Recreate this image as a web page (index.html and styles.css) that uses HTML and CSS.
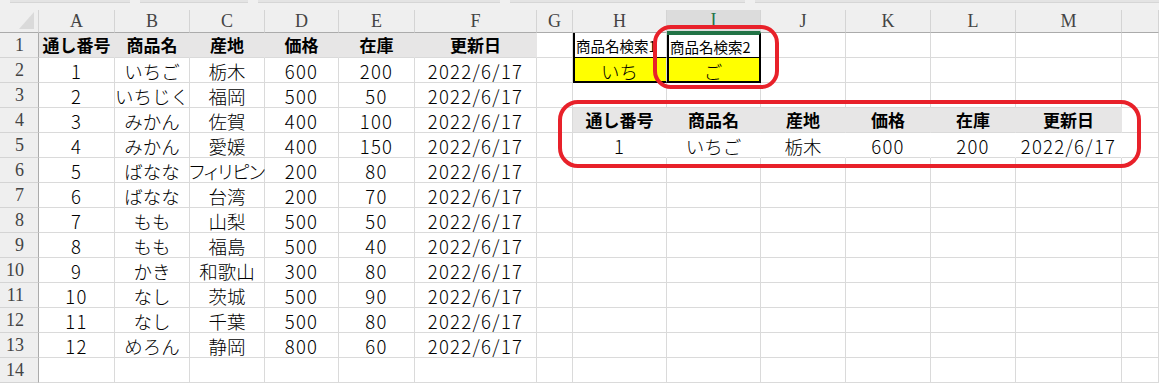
FILE: index.html
```html
<!DOCTYPE html>
<html lang="ja">
<head>
<meta charset="utf-8">
<title>Sheet</title>
<link rel="stylesheet" href="styles.css">
</head>
<body>
<div class="sheet">
  <div class="topbar"><span class="seg s1"></span><span class="seg s2"></span><span class="seg s3"></span><span class="seg s4"></span><span class="seg s5"></span></div>

  <div class="corner"><span class="tri"></span></div>
  <div class="ch">A</div><div class="ch">B</div><div class="ch">C</div><div class="ch">D</div><div class="ch">E</div><div class="ch">F</div><div class="ch">G</div><div class="ch">H</div><div class="ch act">I</div><div class="ch">J</div><div class="ch">K</div><div class="ch">L</div><div class="ch">M</div><div class="ch"></div>

  <div class="rh">1</div>
  <div class="c hd">通し番号</div><div class="c hd">商品名</div><div class="c hd">産地</div><div class="c hd">価格</div><div class="c hd">在庫</div><div class="c hd">更新日</div>
  <div class="c"></div><div class="c sh bl mid">商品名検索1</div><div class="c sh bl br mid sel">商品名検索2</div>
  <div class="c"></div><div class="c"></div><div class="c"></div><div class="c"></div><div class="c"></div>

  <div class="rh">2</div>
  <div class="c n">1</div><div class="c">いちご</div><div class="c">栃木</div><div class="c n">600</div><div class="c n">200</div><div class="c n">2022/6/17</div>
  <div class="c"></div><div class="c yl bl bb">いち</div><div class="c yl bl br bb">ご</div>
  <div class="c"></div><div class="c"></div><div class="c"></div><div class="c"></div><div class="c"></div>

  <div class="rh">3</div>
  <div class="c n">2</div><div class="c">いちじく</div><div class="c">福岡</div><div class="c n">500</div><div class="c n">50</div><div class="c n">2022/6/17</div>
  <div class="c"></div><div class="c"></div><div class="c"></div><div class="c"></div><div class="c"></div><div class="c"></div><div class="c"></div><div class="c"></div>

  <div class="rh">4</div>
  <div class="c n">3</div><div class="c">みかん</div><div class="c">佐賀</div><div class="c n">400</div><div class="c n">100</div><div class="c n">2022/6/17</div>
  <div class="c"></div><div class="c hd">通し番号</div><div class="c hd">商品名</div><div class="c hd">産地</div><div class="c hd">価格</div><div class="c hd">在庫</div><div class="c hd">更新日</div><div class="c"></div>

  <div class="rh">5</div>
  <div class="c n">4</div><div class="c">みかん</div><div class="c">愛媛</div><div class="c n">400</div><div class="c n">150</div><div class="c n">2022/6/17</div>
  <div class="c"></div><div class="c n wf">1</div><div class="c wf">いちご</div><div class="c wf">栃木</div><div class="c n wf">600</div><div class="c n wf">200</div><div class="c n wf">2022/6/17</div><div class="c"></div>

  <div class="rh">6</div>
  <div class="c n">5</div><div class="c">ばなな</div><div class="c nar">フィリピン</div><div class="c n">200</div><div class="c n">80</div><div class="c n">2022/6/17</div>
  <div class="c"></div><div class="c"></div><div class="c"></div><div class="c"></div><div class="c"></div><div class="c"></div><div class="c"></div><div class="c"></div>

  <div class="rh">7</div>
  <div class="c n">6</div><div class="c">ばなな</div><div class="c">台湾</div><div class="c n">200</div><div class="c n">70</div><div class="c n">2022/6/17</div>
  <div class="c"></div><div class="c"></div><div class="c"></div><div class="c"></div><div class="c"></div><div class="c"></div><div class="c"></div><div class="c"></div>

  <div class="rh">8</div>
  <div class="c n">7</div><div class="c">もも</div><div class="c">山梨</div><div class="c n">500</div><div class="c n">50</div><div class="c n">2022/6/17</div>
  <div class="c"></div><div class="c"></div><div class="c"></div><div class="c"></div><div class="c"></div><div class="c"></div><div class="c"></div><div class="c"></div>

  <div class="rh">9</div>
  <div class="c n">8</div><div class="c">もも</div><div class="c">福島</div><div class="c n">500</div><div class="c n">40</div><div class="c n">2022/6/17</div>
  <div class="c"></div><div class="c"></div><div class="c"></div><div class="c"></div><div class="c"></div><div class="c"></div><div class="c"></div><div class="c"></div>

  <div class="rh">10</div>
  <div class="c n">9</div><div class="c">かき</div><div class="c">和歌山</div><div class="c n">300</div><div class="c n">80</div><div class="c n">2022/6/17</div>
  <div class="c"></div><div class="c"></div><div class="c"></div><div class="c"></div><div class="c"></div><div class="c"></div><div class="c"></div><div class="c"></div>

  <div class="rh">11</div>
  <div class="c n">10</div><div class="c">なし</div><div class="c">茨城</div><div class="c n">500</div><div class="c n">90</div><div class="c n">2022/6/17</div>
  <div class="c"></div><div class="c"></div><div class="c"></div><div class="c"></div><div class="c"></div><div class="c"></div><div class="c"></div><div class="c"></div>

  <div class="rh">12</div>
  <div class="c n">11</div><div class="c">なし</div><div class="c">千葉</div><div class="c n">500</div><div class="c n">80</div><div class="c n">2022/6/17</div>
  <div class="c"></div><div class="c"></div><div class="c"></div><div class="c"></div><div class="c"></div><div class="c"></div><div class="c"></div><div class="c"></div>

  <div class="rh">13</div>
  <div class="c n">12</div><div class="c">めろん</div><div class="c">静岡</div><div class="c n">800</div><div class="c n">60</div><div class="c n">2022/6/17</div>
  <div class="c"></div><div class="c"></div><div class="c"></div><div class="c"></div><div class="c"></div><div class="c"></div><div class="c"></div><div class="c"></div>

  <div class="rh">14</div>
  <div class="c"></div><div class="c"></div><div class="c"></div><div class="c"></div><div class="c"></div><div class="c"></div><div class="c"></div><div class="c"></div><div class="c"></div><div class="c"></div><div class="c"></div><div class="c"></div><div class="c"></div><div class="c"></div>

  <div class="ring ring-search"></div>
  <div class="ring ring-result"></div>
</div>
</body>
</html>
```

FILE: styles.css
```css
html, body {
  margin: 0;
  padding: 0;
  background: #ffffff;
}

.sheet {
  position: relative;
  width: 1159px;
  height: 383px;
  overflow: hidden;
  display: grid;
  grid-template-columns: 39px 76px 75px 75px 74px 76px 122px 36px 94px 94px 85px 85px 85px 106px 37px;
  grid-template-rows: 10px 23px repeat(14, 25px);
  font-family: "Noto Sans CJK JP", "Noto Sans", sans-serif;
  font-size: 18.5px;
  font-weight: 300;
  color: #000;
}

.topbar {
  grid-column: 1 / -1;
  background: #f0f0f0;
  display: flex;
  align-items: flex-start;
  gap: 10px;
  padding-left: 10px;
}
.seg {
  display: block;
  height: 3px;
  background: #e4e4e4;
  border-bottom: 1px solid #d6d6d6;
  box-sizing: border-box;
}
.s1 { width: 120px; }
.s2 { width: 108px; }
.s3 { width: 242px; }
.s4 { width: 235px; }
.s5 { flex: 1; }

.corner {
  background: #efefef;
  border-right: 1px solid #d4d4d4;
  border-bottom: 1px solid #ababab;
  box-sizing: border-box;
  display: flex;
  justify-content: flex-end;
  align-items: flex-end;
  padding: 0 4px 3px 0;
}
.tri {
  display: block;
  width: 15px;
  height: 17px;
  background: #dadada;
  clip-path: polygon(100% 0, 100% 100%, 0 100%);
}

.ch {
  background: #efefef;
  border-right: 1px solid #d4d4d4;
  border-bottom: 1px solid #ababab;
  box-sizing: border-box;
  display: flex;
  justify-content: center;
  align-items: flex-end;
  font-family: "Liberation Serif", serif;
  font-size: 18px;
  font-weight: normal;
  line-height: 22px;
  color: #444;
}
.ch.act {
  background: #dcdcdc;
  color: #217346;
  border-bottom: 2px solid #217346;
}

.rh {
  background: #efefef;
  border-right: 1px solid #ababab;
  border-bottom: 1px solid #d4d4d4;
  box-sizing: border-box;
  display: flex;
  justify-content: flex-end;
  align-items: center;
  padding-right: 14px;
  font-family: "Liberation Serif", serif;
  font-size: 18px;
  font-weight: normal;
  color: #444;
}

.c {
  border-right: 1px solid #dadada;
  border-bottom: 1px solid #dadada;
  box-sizing: border-box;
  display: flex;
  justify-content: center;
  align-items: center;
  white-space: nowrap;
  line-height: 24px;
  padding-top: 2px;
  min-width: 0;
}

.n {
  letter-spacing: 1.3px;
}

.nar {
  font-feature-settings: "palt";
  letter-spacing: -0.5px;
}

.hd {
  background: #e7e6e6;
  border-right-color: transparent;
  font-size: 17px;
  font-weight: bold;
  padding-top: 0;
}

.wf {
  background: #ffffff;
  border-right-color: transparent;
}

.sh {
  font-size: 14.5px;
  font-weight: 400;
  justify-content: flex-start;
  padding-left: 3px;
  padding-top: 1px;
  overflow: hidden;
}

.yl {
  background: #ffff00;
  font-size: 18.5px;
}

.bl { box-shadow: inset 2px 0 0 #000; }
.br { border-right: 2px solid #000; }
.bb { border-bottom: 2px solid #000; }
.mid { border-bottom: 1px solid #000; }
.sel { border-top: 2px solid #217346; }

.ring {
  position: absolute;
  border: 4px solid #e8212a;
  box-sizing: border-box;
  pointer-events: none;
}
.ring-search {
  left: 653px;
  top: 25px;
  width: 126px;
  height: 64px;
  border-radius: 18px;
}
.ring-result {
  left: 558px;
  top: 100px;
  width: 583px;
  height: 68px;
  border-radius: 20px;
}
```
